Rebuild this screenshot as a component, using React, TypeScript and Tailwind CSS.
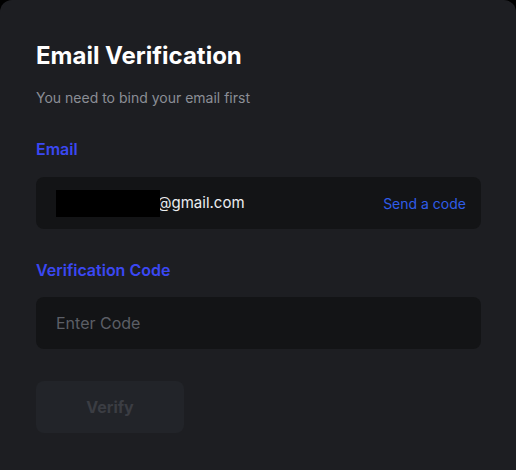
import React from "react";

export default function App() {
  return (
    <div className="w-[516px] h-[470px] bg-black" style={{ fontFamily: "Inter, 'Noto Sans', sans-serif" }}>
      <div className="w-[516px] h-[470px] bg-[#1d1e22] rounded-t-[12px] pl-9 pr-[35px] pt-10 flex flex-col">
        <h1 className="text-[24px] leading-8 font-bold text-white">Email Verification</h1>
        <p className="mt-4 text-[14px] leading-5 text-[#8b8e96]">You need to bind your email first</p>
        <div className="mt-[29px] text-[16px] leading-6 font-semibold text-[#3b48f3]">Email</div>
        <div className="mt-4 h-[52px] rounded-lg bg-[#131416] flex items-center pl-5 pr-[15px]">
          <div className="flex items-center">
            <div className="relative z-10 w-[104px] h-[27px] bg-black" />
            <span className="-ml-[3px] text-[15px] text-[#eceef1]">@gmail.com</span>
          </div>
          <span className="ml-auto text-[14px] text-[#2f5ce8]">Send a code</span>
        </div>
        <div className="mt-[29px] text-[16px] leading-6 font-semibold text-[#3b48f3]">Verification Code</div>
        <div className="mt-[15px] h-[52px] rounded-lg bg-[#131416] flex items-center pl-5">
          <span className="text-[16px] text-[#5c5f66]">Enter Code</span>
        </div>
        <button className="mt-8 w-[148px] h-[52px] rounded-lg bg-[#222429] text-[16px] font-bold text-[#3b3d43]">
          Verify
        </button>
      </div>
    </div>
  );
}
